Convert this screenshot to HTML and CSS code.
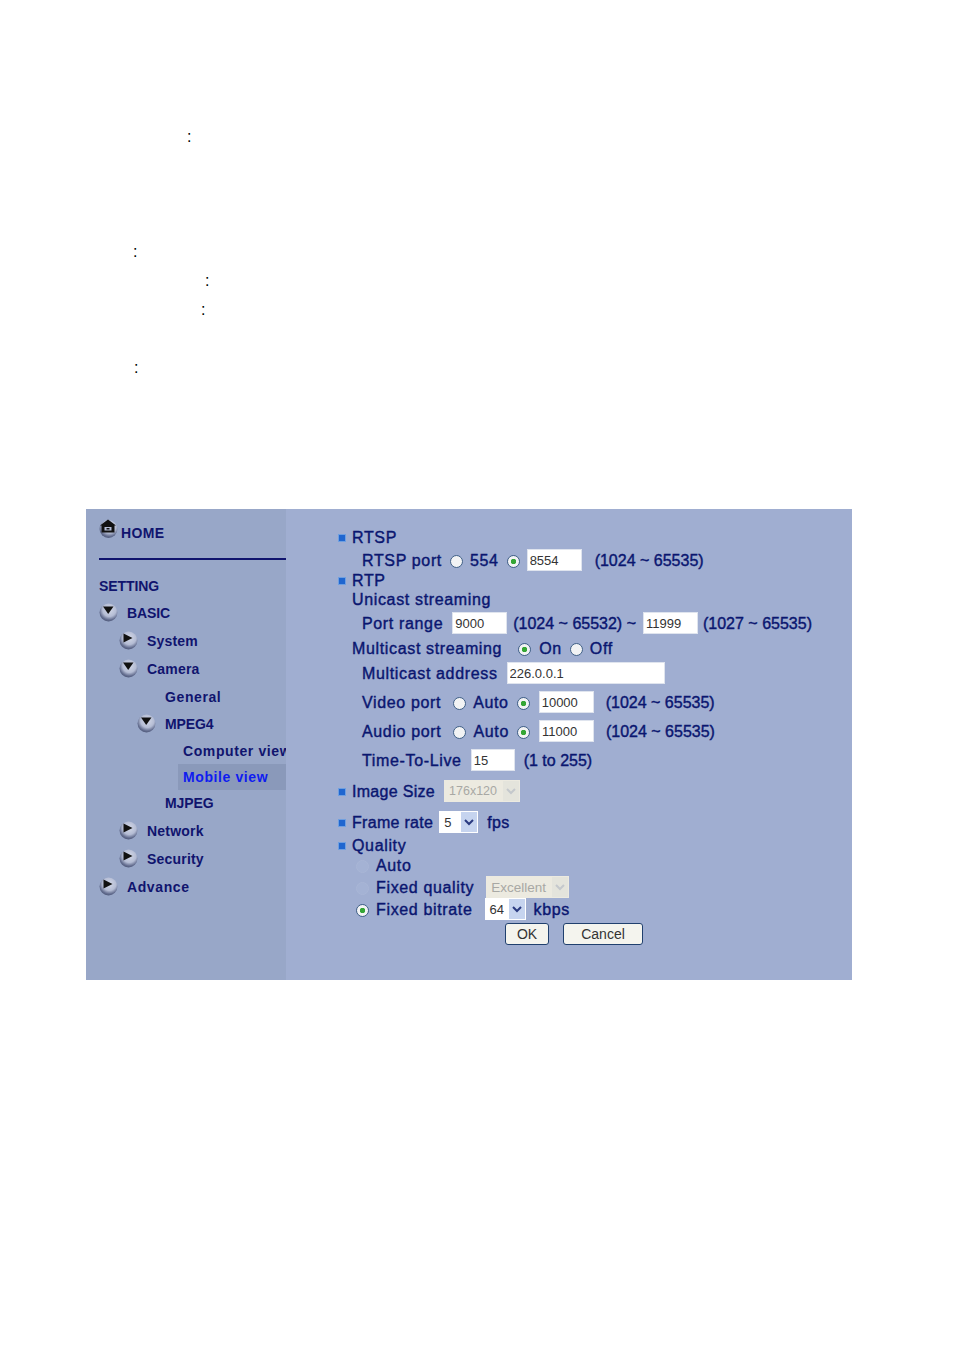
FILE: index.html
```html
<!DOCTYPE html>
<html>
<head lang="en">
	<meta charset="UTF-8">
	<title>Mobile view</title>
	<link rel="stylesheet" href="styles.css">
</head>
<body>

<svg class="defs" width="0" height="0">
	<defs>
		<radialGradient id="ball" cx="55%" cy="35%" r="68%">
			<stop offset="0" stop-color="#d4d9e8"/>
			<stop offset="0.55" stop-color="#b4bcd4"/>
			<stop offset="0.82" stop-color="#646e90"/>
			<stop offset="1" stop-color="#4a5474"/>
		</radialGradient>
		<symbol id="arrow-right" viewBox="0 0 20 20">
			<circle cx="9.5" cy="9.5" r="9" fill="url(#ball)"/>
			<path d="M4.5 2.5 L13.5 7 L4.5 11.5 Z" fill="#111"/>
		</symbol>
		<symbol id="arrow-down" viewBox="0 0 20 20">
			<circle cx="9.5" cy="9.5" r="9" fill="url(#ball)"/>
			<path d="M4 3.5 L14.5 3.5 L9.2 11 Z" fill="#111"/>
		</symbol>
		<symbol id="home" viewBox="0 0 20 20">
			<circle cx="9.5" cy="10" r="9" fill="url(#ball)"/>
			<path d="M9 0.5 L17 6.5 L15.5 6.5 L15.5 13.5 L2.5 13.5 L2.5 6.5 L1 6.5 Z" fill="#111"/>
			<rect x="5.5" y="8" width="7" height="3.5" fill="#b4bcd4"/>
			<rect x="7.5" y="9" width="3" height="1.5" fill="#111"/>
		</symbol>
	</defs>
</svg>

<div class="notes">
	<p class="note note-a">:</p>
	<p class="note note-b">:</p>
	<p class="note note-c">:</p>
	<p class="note note-d">:</p>
	<p class="note note-e">:</p>
</div>

<div class="panel">

	<div class="sidebar">
		<div class="home-row">
			<svg class="home-icon"><use href="#home"/></svg>
			<a class="home-link">HOME</a>
		</div>
		<div class="rule"></div>

		<div class="tree">
			<div class="row plain">SETTING</div>
			<div class="row plain gap1"><svg class="ball"><use href="#arrow-down"/></svg>BASIC</div>
			<div class="row wide gap2 lv1"><svg class="ball"><use href="#arrow-right"/></svg>System</div>
			<div class="row wide gap2 lv1"><svg class="ball"><use href="#arrow-down"/></svg>Camera</div>
			<div class="row wide gap2 lv2-text">General</div>
			<div class="row plain gap1 lv2"><svg class="ball"><use href="#arrow-down"/></svg>MPEG4</div>
			<div class="row wide gap1 lv3-text">Computer view</div>
			<div class="row wide lv3-text current">Mobile view</div>
			<div class="row plain lv2-text">MJPEG</div>
			<div class="row wide gap2 lv1"><svg class="ball"><use href="#arrow-right"/></svg>Network</div>
			<div class="row wide gap2 lv1"><svg class="ball"><use href="#arrow-right"/></svg>Security</div>
			<div class="row wide gap2"><svg class="ball"><use href="#arrow-right"/></svg>Advance</div>
		</div>
	</div>

	<form class="settings">
		<div class="line head"><i class="bullet"></i>RTSP</div>
		<div class="line sub m5">RTSP port
			<input type="radio" name="rtsp"><span>554</span>
			<input type="radio" name="rtsp" checked>
			<input class="field" type="text" value="8554">
			<span class="hint">(1024 ~ 65535)</span>
		</div>
		<div class="line head m2"><i class="bullet"></i>RTP</div>
		<div class="line indent m1">Unicast streaming</div>
		<div class="line sub m6">Port range
			<input class="field after-text" type="text" value="9000">
			<span class="range">(1024 ~ 65532) ~</span>
			<input class="field" type="text" value="11999">
			<span class="range end">(1027 ~ 65535)</span>
		</div>
		<div class="line indent m7">Multicast streaming
			<input class="radio-first" type="radio" name="multi" checked><span>On</span>
			<input type="radio" name="multi"><span>Off</span>
		</div>
		<div class="line sub m7">Multicast address
			<input class="field long" type="text" value="226.0.0.1">
		</div>
		<div class="line sub port m11">Video port
			<input type="radio" name="video"><span>Auto</span>
			<input type="radio" name="video" checked>
			<input class="field" type="text" value="10000">
			<span class="hint">(1024 ~ 65535)</span>
		</div>
		<div class="line sub port m11">Audio port
			<input type="radio" name="audio"><span>Auto</span>
			<input type="radio" name="audio" checked>
			<input class="field" type="text" value="11000">
			<span class="hint">(1024 ~ 65535)</span>
		</div>
		<div class="line sub m11">Time-To-Live
			<input class="field short" type="text" value="15">
			<span class="hint ttl">(1 to 255)</span>
		</div>
		<div class="line head narrow m13"><i class="bullet"></i>Image Size
			<span class="select disabled size"><b>176x120</b><svg viewBox="0 0 16 20"><path d="M4 8 L8 12 L12 8" fill="none" stroke="#c4c8cc" stroke-width="2"/></svg></span>
		</div>
		<div class="line head narrow m13"><i class="bullet"></i>Frame rate
			<span class="select rate"><b>5</b><svg viewBox="0 0 16 20"><path d="M4 8 L8 12 L12 8" fill="none" stroke="#2a3a80" stroke-width="2"/></svg></span>
			<span class="unit">fps</span>
		</div>
		<div class="line head m5"><i class="bullet"></i>Quality</div>
		<div class="line option m2"><input type="radio" name="quality" disabled>Auto</div>
		<div class="line option m4"><input type="radio" name="quality" disabled>Fixed quality
			<span class="select disabled level"><b>Excellent</b><svg viewBox="0 0 16 20"><path d="M4 8 L8 12 L12 8" fill="none" stroke="#c4c8cc" stroke-width="2"/></svg></span>
		</div>
		<div class="line option m4"><input type="radio" name="quality" checked>Fixed bitrate
			<span class="select bitrate"><b>64</b><svg viewBox="0 0 16 20"><path d="M4 8 L8 12 L12 8" fill="none" stroke="#2a3a80" stroke-width="2"/></svg></span>
			<span class="unit kbps">kbps</span>
		</div>
		<div class="buttons">
			<button type="button" class="btn ok">OK</button>
			<button type="button" class="btn cancel">Cancel</button>
		</div>
	</form>

</div>

</body>
</html>
```

FILE: styles.css
```css
* {
	margin: 0;
	padding: 0;
	box-sizing: border-box;
	font-family: "Liberation Sans", Arial, sans-serif;
}
body {
	background: #ffffff;
	padding-top: 122px;
}
.defs {
	position: absolute;
}

/* the stray colons above the screenshot */
.notes {
	height: 387px;
}
.note {
	height: 29px;
	line-height: 29px;
	font-size: 16px;
	color: #000000;
}
.note-a {
	padding-left: 187px;
	margin-bottom: 86px;
}
.note-b {
	padding-left: 133px;
}
.note-c {
	padding-left: 205px;
}
.note-d {
	padding-left: 201px;
	margin-bottom: 29px;
}
.note-e {
	padding-left: 134px;
}

.panel {
	display: flex;
	width: 766px;
	height: 471px;
	margin-left: 86px;
	background: #a0aed1;
}

/* left menu */
.sidebar {
	width: 200px;
	flex: none;
	overflow: hidden;
	background: #98a7c8;
	padding: 10px 0 0 13px;
	color: #10146e;
	font-weight: 700;
	white-space: nowrap;
}
.home-row {
	display: flex;
	align-items: flex-start;
	height: 30px;
	font-size: 14px;
	letter-spacing: 0.4px;
}
.home-icon {
	width: 20px;
	height: 20px;
	flex: none;
}
.home-link {
	margin: 6px 0 0 2px;
}
.rule {
	height: 2px;
	background: #10146e;
	margin: 9px 0 0 0;
}
.tree {
	margin-top: 13px;
}
.row {
	display: flex;
	align-items: center;
	height: 26px;
	font-size: 14px;
}
.row.plain {
	letter-spacing: -0.1px;
}
.row.wide {
	letter-spacing: 0.6px;
}
.ball {
	width: 20px;
	height: 20px;
	flex: none;
	margin-right: 8px;
}
.row.lv1 {
	padding-left: 20px;
	letter-spacing: 0.2px;
}
.lv2 {
	padding-left: 38px;
}
.lv2-text {
	padding-left: 66px;
}
.lv3-text {
	padding-left: 84px;
}
.current {
	margin-left: 79px;
	padding-left: 5px;
	background: #8a99ba;
	color: #0f1cf0;
}
.gap1 {
	margin-top: 1px;
}
.gap2 {
	margin-top: 2px;
}

/* settings form */
.settings {
	flex: 1;
	padding: 20px 0 0 66px;
	color: #0a1670;
	font-size: 16px;
	font-weight: 400;
	letter-spacing: 0.65px;
	-webkit-text-stroke: 0.4px #0a1670;
	white-space: nowrap;
}
.line {
	display: flex;
	align-items: center;
	height: 18px;
}
.narrow {
	letter-spacing: 0.3px;
}
.sub {
	padding-left: 10px;
}
.option {
	padding-left: 4px;
}
.bullet {
	width: 8px;
	height: 8px;
	margin: 0 6px 0 -14px;
	background: #1f66d0;
	border: 1px solid #6f9fe0;
	flex: none;
}
.m1 { margin-top: 1px; }
.m2 { margin-top: 2px; }
.m4 { margin-top: 4px; }
.m5 { margin-top: 5px; }
.m6 { margin-top: 6px; }
.m7 { margin-top: 7px; }
.m11 { margin-top: 11px; }
.m13 { margin-top: 13px; }

input[type="radio"] {
	appearance: none;
	width: 13px;
	height: 13px;
	margin: 0 7px 0 8px;
	flex: none;
	border-radius: 50%;
	border: 1px solid #3f5f86;
	background: #f2f3f4;
}
input[type="radio"]:checked {
	background: radial-gradient(circle, #35a635 0, #35a635 2.5px, #f2f3f4 3px);
}
input[type="radio"]:disabled {
	border-color: #a9b6d6;
	background: #a4b2d4;
}
input.radio-first {
	margin-left: 16px;
	margin-right: 8px;
}
.port input[type="radio"]:first-of-type {
	margin-left: 12px;
}
.option input[type="radio"] {
	margin: 0 7px 0 0;
}
.field {
	width: 55px;
	height: 22px;
	margin-top: -2px;
	padding: 0 2px;
	border: 1px solid #dfe4ee;
	background: #ffffff;
	font-size: 13px;
	color: #333333;
	letter-spacing: 0;
	-webkit-text-stroke: 0;
}
.port input[type="radio"]:checked + .field {
	margin-left: 2px;
}
.field.after-text {
	margin-left: 9px;
}
.field.long {
	width: 158px;
	margin-left: 9px;
}
.field.short {
	width: 44px;
	margin-left: 9px;
}
.hint {
	margin-left: 13px;
	letter-spacing: 0;
}
.port .hint {
	margin-left: 12px;
}
.hint.ttl {
	margin-left: 9px;
}
.range {
	margin: 0 7px 0 6px;
	letter-spacing: 0;
}
.range.end {
	margin-left: 5px;
}
.unit {
	margin-left: 9px;
}
.unit.kbps {
	margin-left: 8px;
}
.select {
	display: inline-flex;
	align-items: center;
	justify-content: space-between;
	height: 22px;
	margin-top: -2px;
	padding: 0 1px 0 5px;
	background: #ffffff;
	letter-spacing: 0;
	-webkit-text-stroke: 0;
}
.select b {
	font-weight: 400;
	font-size: 13px;
	color: #333333;
}
.select svg {
	width: 16px;
	height: 20px;
	background: #c6d4ef;
}
.select.disabled {
	background: #eceae0;
}
.select.disabled b {
	color: #a8a8a4;
}
.select.disabled svg {
	background: #e4e4dc;
}
.size {
	width: 76px;
	margin-left: 9px;
}
.size b {
	font-size: 12.5px;
}
.rate {
	width: 39px;
	margin-left: 6px;
}
.level {
	width: 83px;
	margin-left: 12px;
}
.select.level b {
	font-size: 13.5px;
}
.bitrate {
	width: 41px;
	margin-left: 12px;
}
.buttons {
	display: flex;
	gap: 14px;
	margin: 4px 0 0 153px;
}
.btn {
	height: 22px;
	border: 1px solid #20406e;
	border-radius: 3px;
	background: #f4f4ee;
	font-size: 14px;
	color: #333333;
	letter-spacing: 0;
	-webkit-text-stroke: 0;
}
.ok {
	width: 44px;
}
.cancel {
	width: 80px;
}
```
